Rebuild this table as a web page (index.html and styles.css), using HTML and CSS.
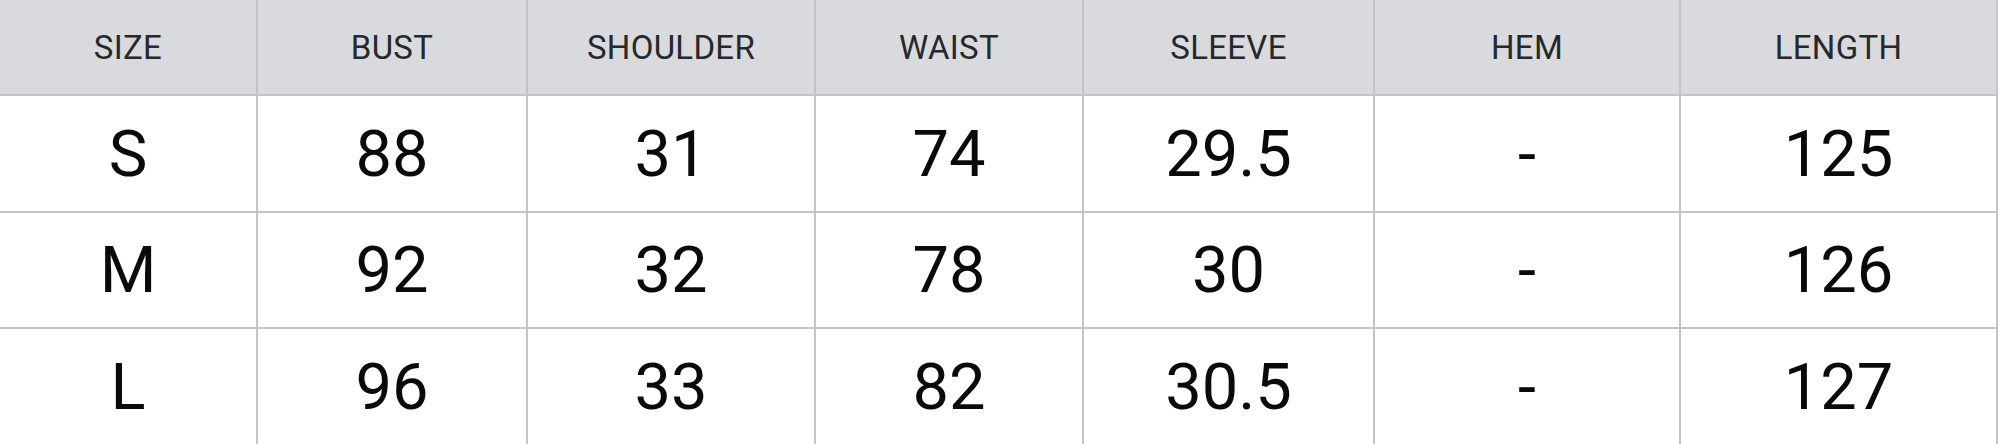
FILE: index.html
```html
<!DOCTYPE html>
<html lang="en">
<head>
<meta charset="utf-8">
<title>Size chart</title>
<link rel="stylesheet" href="styles.css">
</head>
<body>
<div class="chart">
  <div class="cell head">SIZE</div>
  <div class="cell head">BUST</div>
  <div class="cell head">SHOULDER</div>
  <div class="cell head">WAIST</div>
  <div class="cell head">SLEEVE</div>
  <div class="cell head">HEM</div>
  <div class="cell head">LENGTH</div>

  <div class="cell">S</div>
  <div class="cell">88</div>
  <div class="cell">31</div>
  <div class="cell">74</div>
  <div class="cell">29.5</div>
  <div class="cell">-</div>
  <div class="cell">125</div>

  <div class="cell">M</div>
  <div class="cell">92</div>
  <div class="cell">32</div>
  <div class="cell">78</div>
  <div class="cell">30</div>
  <div class="cell">-</div>
  <div class="cell">126</div>

  <div class="cell">L</div>
  <div class="cell">96</div>
  <div class="cell">33</div>
  <div class="cell">82</div>
  <div class="cell">30.5</div>
  <div class="cell">-</div>
  <div class="cell">127</div>
</div>
</body>
</html>
```
FILE: styles.css
```css
html, body {
  margin: 0;
  padding: 0;
  background: #ffffff;
}

.chart {
  display: grid;
  grid-template-columns: 258px 270px 288px 268px 291px 306px 317px;
  grid-template-rows: 96px 117px 116px 117px;
  width: 1998px;
  font-family: Roboto, "Liberation Sans", Arial, sans-serif;
}

.cell {
  display: flex;
  align-items: center;
  justify-content: center;
  border-right: 2px solid #c3c4c7;
  border-bottom: 2px solid #c3c4c7;
  font-size: 65px;
  color: #0a0a0a;
  background: #ffffff;
}

.cell.head {
  background: #d9dade;
  font-size: 33px;
  color: #26282b;
  letter-spacing: 0.3px;
}
```
